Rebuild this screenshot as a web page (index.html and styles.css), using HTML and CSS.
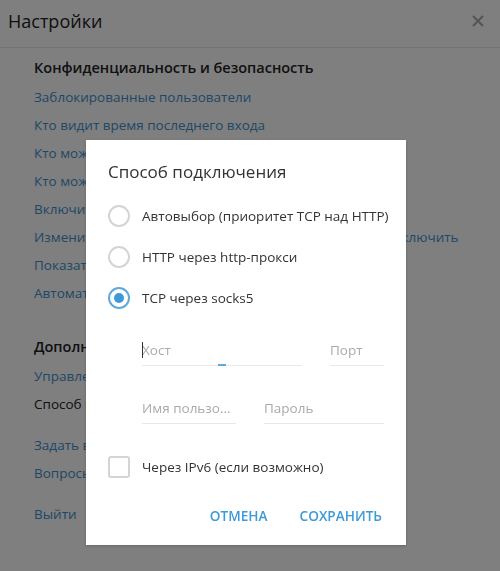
FILE: index.html
```html
<!DOCTYPE html>
<html lang="ru">

<head>
    <meta charset="UTF-8">
    <meta name="viewport" content="width=device-width, initial-scale=1.0">
    <title>Настройки</title>
    <link rel="stylesheet" href="styles.css">
</head>

<body>

    <div class="settings">
        <div class="settings-head">
            <h1>Настройки</h1>
            <svg class="close" width="12" height="12" viewBox="0 0 12 12">
                <path d="M1 1 L11 11 M11 1 L1 11" />
            </svg>
        </div>

        <div class="settings-body">
            <div class="group">
                <h2>Конфиденциальность и безопасность</h2>
                <a href="#">Заблокированные пользователи</a>
                <a href="#">Кто видит время последнего входа</a>
                <a href="#">Кто может мне звонить</a>
                <a href="#">Кто может добавлять меня в группы</a>
                <a href="#">Включить локальный код-пароль</a>
                <div class="row">
                    <a href="#">Изменить облачный пароль</a>
                    <a href="#" class="row-side">Отключить</a>
                </div>
                <a href="#">Показать все сессии</a>
                <a href="#">Автоматическое удаление аккаунта</a>
            </div>

            <div class="group group-wide">
                <h2>Дополнительные настройки</h2>
                <a href="#">Управление локальным хранилищем</a>
                <span class="plain">Способ подключения: TCP через socks5</span>
            </div>

            <div class="group">
                <a href="#">Задать вопрос</a>
                <a href="#">Вопросы о Telegram</a>
            </div>

            <div class="group">
                <a href="#">Выйти</a>
            </div>
        </div>
    </div>

    <div class="overlay">
        <form class="dialog" id="connection-form">
            <h3>Способ подключения</h3>

            <div class="options">
                <label class="option">
                    <input type="radio" name="type" value="auto">
                    <span class="radio"></span>
                    Автовыбор (приоритет TCP над HTTP)
                </label>
                <label class="option">
                    <input type="radio" name="type" value="http">
                    <span class="radio"></span>
                    HTTP через http-прокси
                </label>
                <label class="option">
                    <input type="radio" name="type" value="socks5" checked>
                    <span class="radio"></span>
                    TCP через socks5
                </label>
            </div>

            <div class="fields">
                <div class="field-row">
                    <div class="field field-host focused">
                        <input type="text" placeholder="Хост">
                        <span class="caret"></span>
                        <span class="focus-bar"></span>
                    </div>
                    <div class="field field-port">
                        <input type="text" placeholder="Порт">
                    </div>
                </div>
                <div class="field-row">
                    <div class="field field-user">
                        <input type="text" placeholder="Имя пользо...">
                    </div>
                    <div class="field field-pass">
                        <input type="password" placeholder="Пароль">
                    </div>
                </div>
            </div>

            <label class="option check-option">
                <input type="checkbox" name="ipv6">
                <span class="checkbox"></span>
                Через IPv6 (если возможно)
            </label>

            <div class="buttons">
                <button type="button">Отмена</button>
                <button type="submit">Сохранить</button>
            </div>
        </form>
    </div>

</body>

</html>
```

FILE: styles.css
```css
/* Reset some default styles */
* {
    margin: 0;
    padding: 0;
    box-sizing: border-box;
}

body {
    font-family: 'Open Sans', 'DejaVu Sans', sans-serif;
    background-color: #ffffff;
    color: #333;
    width: 500px;
    height: 571px;
    overflow: hidden;
}

/* Settings page under the dialog */
.settings-head {
    height: 48px;
    display: flex;
    align-items: center;
    justify-content: space-between;
    padding: 0 16px 0 8px;
    border-bottom: 1px solid #e6e6e6;
}

.settings-head h1 {
    font-size: 18px;
    font-weight: 400;
    color: #222;
    margin-top: -6px;
}

.close {
    margin-top: -6px;
}

.close path {
    stroke: #a8a8a8;
    stroke-width: 2;
    fill: none;
}

.settings-body {
    padding: 6px 0 0 34px;
}

.group {
    margin-top: 13px;
    display: flex;
    flex-direction: column;
    align-items: flex-start;
}

.group:first-child {
    margin-top: 0;
}

.group-wide {
    margin-top: 26px;
}

.group h2 {
    font-size: 14.5px;
    font-weight: 600;
    line-height: 28px;
    color: #222;
    margin-bottom: 1px;
}

.group a,
.group .plain {
    font-size: 13.5px;
    line-height: 28px;
    color: #3f8fcc;
    text-decoration: none;
}

.group .plain {
    color: #222;
}

.row {
    display: flex;
    width: 100%;
}

.row-side {
    margin-left: 163px;
}

/* Dim layer and dialog */
.overlay {
    position: fixed;
    inset: 0;
    background-color: rgba(0, 0, 0, 0.5);
    padding: 140px 0 0 86px;
}

.dialog {
    width: 320px;
    height: 405px;
    background-color: #ffffff;
    padding: 0 22px;
    box-shadow: 0px 1px 3px rgba(0, 0, 0, 0.2);
}

.dialog h3 {
    font-size: 17px;
    font-weight: 400;
    line-height: 24px;
    color: #333;
    padding-top: 20px;
}

.options {
    margin-top: 11px;
}

.option {
    display: flex;
    align-items: center;
    height: 41px;
    font-size: 13.5px;
    color: #333;
    white-space: nowrap;
    cursor: pointer;
}

.option input {
    display: none;
}

.radio,
.checkbox {
    width: 22px;
    height: 22px;
    margin-right: 12px;
    border: 2px solid #d4d4d4;
    flex-shrink: 0;
}

.radio {
    border-radius: 50%;
    position: relative;
}

.option input:checked + .radio {
    border-color: #5fa9dc;
}

.option input:checked + .radio::after {
    content: "";
    position: absolute;
    left: 4px;
    top: 4px;
    width: 10px;
    height: 10px;
    border-radius: 50%;
    background-color: #3d9ad9;
}

.checkbox {
    border-radius: 3px;
}

.fields {
    margin: 16px 0 0 34px;
}

.field-row {
    display: flex;
    gap: 28px;
    margin-bottom: 26px;
}

.field {
    position: relative;
    height: 32px;
    border-bottom: 1px solid #e8e8e8;
}

.field input {
    width: 100%;
    height: 31px;
    border: none;
    outline: none;
    font-family: inherit;
    font-size: 13.5px;
    color: #333;
    background: transparent;
}

.field input::placeholder {
    color: #aaaaaa;
}

.field-host {
    width: 160px;
}

.field-port {
    width: 54px;
}

.field-user {
    width: 94px;
}

.field-pass {
    width: 120px;
}

.caret {
    position: absolute;
    left: 0;
    top: 8px;
    width: 1px;
    height: 16px;
    background-color: #333;
}

.focus-bar {
    position: absolute;
    left: 76px;
    bottom: -1px;
    width: 8px;
    height: 2px;
    background-color: #5fa9dc;
}

.check-option {
    margin-top: -4px;
}

.buttons {
    display: flex;
    justify-content: flex-end;
    gap: 12px;
    margin: 10px -8px 0 0;
}

.buttons button {
    height: 36px;
    padding: 0 10px;
    background: none;
    border: none;
    font-family: inherit;
    font-size: 13.6px;
    font-weight: 600;
    text-transform: uppercase;
    color: #3d9ad9;
    cursor: pointer;
}
```
